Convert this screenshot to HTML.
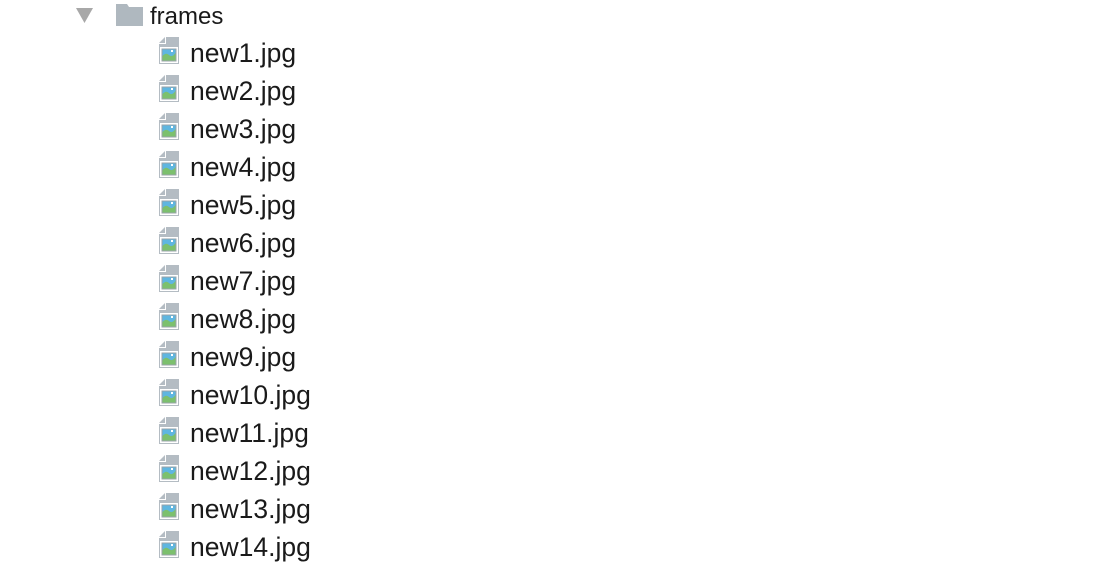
<!DOCTYPE html>
<html><head><style>
body{margin:0;width:1108px;height:570px;background:#fff;overflow:hidden;position:relative;font-family:"Liberation Sans",Helvetica,Arial,sans-serif;color:#1a1a1a}
.t{position:absolute;font-size:26.5px;line-height:30px;white-space:nowrap}
svg{position:absolute}
</style></head><body>
<svg style="left:76px;top:8px" width="17" height="15"><polygon points="0,0 17,0 8.5,15" fill="#a8a8a8"/></svg>
<svg style="left:116px;top:4px" width="27" height="22"><path d="M0 0H11L13 3H27V22H0Z" fill="#afb8bf"/></svg>
<div class="t" style="left:150px;top:2px;font-size:24px">frames</div>
<div id="rows"></div>
<script>
var h='';
for(var i=0;i<14;i++){var y=37+i*38;
h+='<svg style="left:159px;top:'+y+'px" width="20" height="27"><path d="M7 0H20V27H0V7H7Z" fill="#b4bcc3"/><path d="M0 6L6 0V6Z" fill="#b4bcc3"/><rect x="1" y="10" width="18" height="16" fill="#fff"/><rect x="3" y="12" width="14" height="12" fill="#5fb6e0" stroke="#9aa3aa" stroke-width="1"/><path d="M3.5 23.5V19Q7 15 10 18T16.5 16V23.5Z" fill="#7cc06e"/><rect x="12" y="13" width="2" height="2" fill="#fff"/></svg>';
h+='<div class="t" style="left:190px;top:'+(y+1)+'px">new'+(i+1)+'.jpg</div>';}
document.getElementById('rows').outerHTML=h;
</script>
</body></html>
